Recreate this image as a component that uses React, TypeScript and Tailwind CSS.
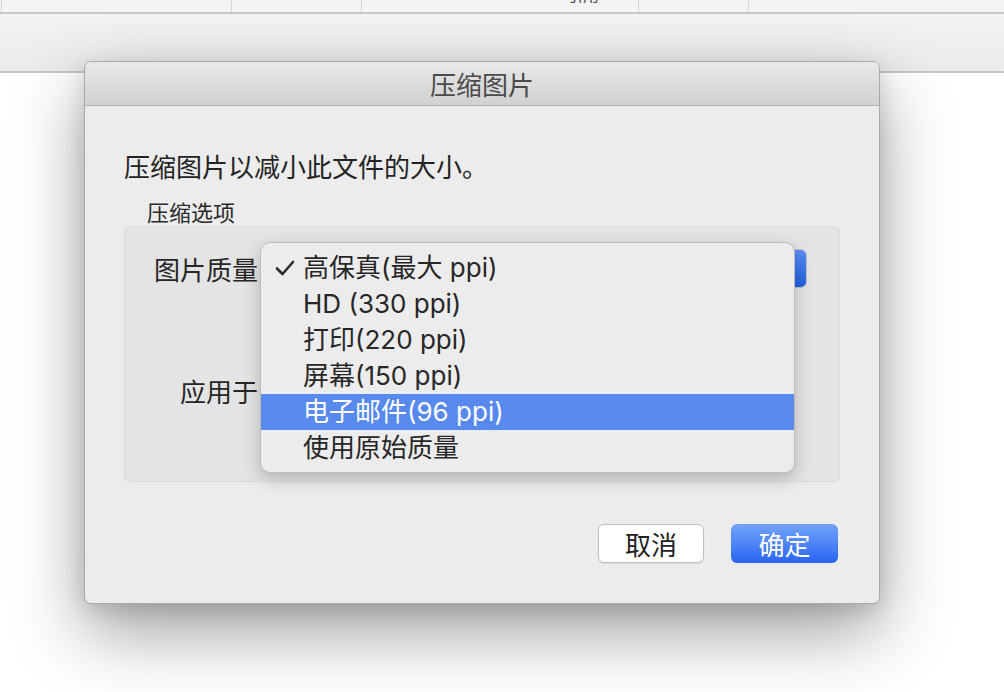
import React from "react";

const items = [
  "高保真(最大 ppi)",
  "HD (330 ppi)",
  "打印(220 ppi)",
  "屏幕(150 ppi)",
  "电子邮件(96 ppi)",
  "使用原始质量",
];

export default function App() {
  return (
    <div className="relative w-[1004px] h-[692px] overflow-hidden bg-white font-['Noto_Sans_CJK_SC',sans-serif] text-[#262626]">
      {/* top strip */}
      <div className="h-[14px] bg-[#f4f4f4] border-b-2 border-[#c9c9c9] flex overflow-hidden">
        <div className="w-[2px] border-r border-[#d6d6d6]" />
        <div className="w-[230px] border-r border-[#d6d6d6]" />
        <div className="w-[130px] border-r border-[#d6d6d6]" />
        <div className="w-[277px] border-r border-[#d6d6d6] relative overflow-hidden">
          <span className="block ml-[205px] -mt-[15px] text-[16px] leading-[18px] text-[#444]">引用</span>
        </div>
        <div className="w-[110px] border-r border-[#d6d6d6]" />
        <div className="flex-1" />
      </div>
      {/* toolbar */}
      <div className="h-[59px] bg-gradient-to-b from-[#f3f3f3] to-[#ebebeb] border-b-2 border-[#c8c8c8]" />
      {/* page */}
      <div className="flex-1 bg-white" />

      {/* dialog sheet */}
      <div className="absolute left-[84px] top-[61px] w-[796px] h-[543px] rounded-[7px] bg-[#ececec] border border-[#a9a9a9] shadow-[0_28px_70px_rgba(0,0,0,0.38),0_6px_20px_rgba(0,0,0,0.12)] flex flex-col overflow-hidden">
        <div className="h-[44px] shrink-0 bg-gradient-to-b from-[#e8e8e8] to-[#d1d1d1] border-b border-[#b2b2b2] flex items-center justify-center">
          <span className="text-[26px] leading-none text-[#4a4a4a]">压缩图片</span>
        </div>
        <div className="px-[39px] pt-[42px] flex flex-col">
          <div className="text-[26px] leading-[36px] text-[#232323]">压缩图片以减小此文件的大小。</div>
          <div className="mt-[13px] ml-[23px] text-[22px] leading-[28px] text-[#2a2a2a]">压缩选项</div>
          <div className="mt-[1px] h-[256px] rounded-[6px] bg-[#e4e4e4] border border-[#dadada] pt-[22px] flex flex-col">
            <div className="h-[39px] flex items-center">
              <div className="w-[133px] text-right text-[26px] leading-none text-[#262626]">图片质量</div>
              <div className="ml-[8px] w-[541px] h-[39px] rounded-[6px] bg-white border border-[#c2c2c2] flex justify-end">
                <div className="w-[32px] h-full rounded-[5px] bg-gradient-to-b from-[#5a8ff7] to-[#1f5fe0] flex flex-col items-center justify-center gap-[4px]">
                  <svg width="12" height="8" viewBox="0 0 12 8"><path d="M2 6 L6 2 L10 6" stroke="white" strokeWidth="2" fill="none" /></svg>
                  <svg width="12" height="8" viewBox="0 0 12 8"><path d="M2 2 L6 6 L10 2" stroke="white" strokeWidth="2" fill="none" /></svg>
                </div>
              </div>
            </div>
            <div className="mt-[83px] h-[39px] flex items-center">
              <div className="w-[133px] text-right text-[26px] leading-none text-[#262626]">应用于</div>
            </div>
          </div>
          <div className="mt-[42px] mr-[2px] flex justify-end gap-[27px]">
            <button className="w-[106px] h-[39px] rounded-[6px] bg-white border border-[#bfbfbf] shadow-[0_1px_1px_rgba(0,0,0,0.08)] text-[26px] leading-none text-[#222]">取消</button>
            <button className="w-[107px] h-[39px] rounded-[6px] bg-gradient-to-b from-[#72a2f9] to-[#2964f0] text-[26px] leading-none text-white">确定</button>
          </div>
        </div>
      </div>

      {/* popup menu */}
      <div className="absolute left-[260px] top-[242px] w-[535px] h-[231px] rounded-[10px] bg-[#ececec] border border-[#bcbcbc] shadow-[0_6px_18px_rgba(0,0,0,0.22)] py-[7px] overflow-hidden font-['Inter','Noto_Sans_CJK_SC',sans-serif]">
        {items.map((t, i) => {
          const sel = i === 4;
          return (
            <div
              key={t}
              className={
                sel
                  ? "h-[36px] flex items-center bg-[#588aee] text-white"
                  : "h-[36px] flex items-center text-[#272727]"
              }
            >
              <div className="w-[42px] flex items-center justify-center pl-[6px]">
                {i === 0 && (
                  <svg width="20" height="16" viewBox="0 0 20 16">
                    <path d="M2 8.5 L7.5 14 L18 2" stroke="#2a2a2a" strokeWidth="2.6" fill="none" strokeLinecap="round" strokeLinejoin="round" />
                  </svg>
                )}
              </div>
              <span className="text-[26px] leading-none">{t}</span>
            </div>
          );
        })}
      </div>
    </div>
  );
}
